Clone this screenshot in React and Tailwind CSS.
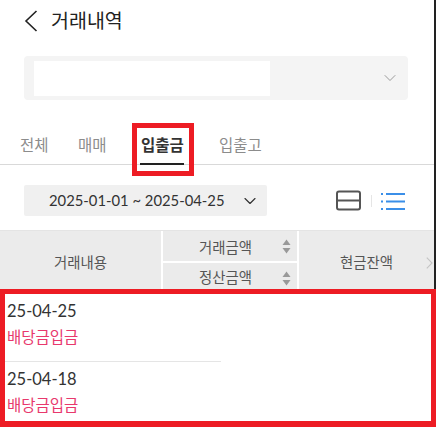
import React from "react";
import { ChevronDown } from "lucide-react";

const FONT = "font-['Lato','Noto_Sans_CJK_KR',sans-serif]";

function BackIcon() {
  return (
    <svg width="14" height="22" viewBox="0 0 14 22" fill="none" stroke="#222222" strokeWidth="1.6">
      <path d="M12.5 1 L2 11 L12.5 21" />
    </svg>
  );
}

function NextIcon() {
  return (
    <svg width="7" height="12" viewBox="0 0 7 12" fill="none" stroke="#c4c4c4" strokeWidth="1.1">
      <path d="M0.8 0.6 L6 6 L0.8 11.4" />
    </svg>
  );
}

function SortIcon() {
  return (
    <svg width="9" height="15" viewBox="0 0 9 15" className="shrink-0">
      <path d="M4.5 0.5 L8.5 6 H0.5 Z" fill="#999999" />
      <path d="M4.5 14.5 L8.5 9 H0.5 Z" fill="#999999" />
    </svg>
  );
}

function SplitViewIcon() {
  return (
    <svg width="26" height="22" viewBox="0 0 26 22" fill="none" stroke="#555555" strokeWidth="2">
      <rect x="1" y="1.5" width="23" height="18" rx="2" />
      <path d="M1 10.5 H24" />
    </svg>
  );
}

function ListViewIcon() {
  return (
    <svg width="24" height="18" viewBox="0 0 24 18" fill="none" stroke="#3b8fe8" strokeWidth="2">
      <path d="M5 2 H24 M5 9.5 H24 M5 17 H24" />
      <path d="M0 2 H2 M0 9.5 H2 M0 17 H2" />
    </svg>
  );
}

function Row({ date, label }) {
  return (
    <div className="h-[67px] flex flex-col pl-[2px]">
      <div className="text-[16.5px] leading-[24px] text-[#333333] mt-[5px]">{date}</div>
      <div className="text-[15.5px] leading-[24px] text-[#e8386d] mt-[2px]">{label}</div>
    </div>
  );
}

export default function App() {
  return (
    <div className={`w-[436px] h-[427px] overflow-hidden bg-white relative ${FONT}`}>
      {/* 헤더 */}
      <div className="h-[56px] pb-[14px] flex items-center pl-[24px]">
        <BackIcon />
        <span className="text-[19.5px] text-[#222222] ml-[13px]">거래내역</span>
      </div>

      {/* 계좌 선택 */}
      <div className="mx-[24px] w-[384px] h-[44px] bg-[#f4f4f4] rounded-[4px] flex items-center justify-between pl-[10px] pr-[8px]">
        <div className="w-[236px] h-[35px] bg-white" />
        <ChevronDown size={20} strokeWidth={1} color="#888888" />
      </div>

      {/* 탭 */}
      <div className="h-[65px] border-b border-[#d9d9d9] flex items-end pl-[20px] text-[15.5px] text-[#8c8c8c] leading-[20px]">
        <span className="w-[58px] mb-[9px]">전체</span>
        <span className="w-[63px] mb-[9px]">매매</span>
        <span className="relative w-[78px] mb-[9px] font-bold text-[#333333]">
          입출금
          <span className="absolute left-[-1px] top-[28px] w-[44px] h-[2px] bg-[#222222]" />
          <span className="absolute left-[-9px] top-[-12px] w-[62px] h-[53px] border-[5px] border-[#ed1c24]" />
        </span>
        <span className="mb-[9px]">입출고</span>
      </div>

      {/* 기간 */}
      <div className="h-[65px] flex items-start pt-[20px] pl-[24px]">
        <div className="w-[243px] h-[31px] bg-[#f0f0f0] rounded-[2px] flex items-center pl-[25px] text-[14.8px] text-[#333333]">
          <span>2025-01-01 ~ 2025-04-25</span>
          <ChevronDown size={20} strokeWidth={1.4} color="#333333" className="ml-[16px]" />
        </div>
        <div className="flex items-center h-[31px] ml-[69px]">
          <SplitViewIcon />
          <span className="w-px h-[12px] bg-[#e5e5e5] mx-[9px]" />
          <ListViewIcon />
        </div>
      </div>

      {/* 테이블 헤더 */}
      <div className="h-[59px] bg-[#ebebeb] flex text-[14.4px] text-[#555555] border-t border-[#e4e4e4]">
        <div className="w-[161px] flex items-center justify-center pt-[5px]">거래내용</div>
        <div className="w-[138px] border-x-2 border-white flex flex-col">
          <div className="h-[32px] flex items-center justify-center relative border-b-2 border-white pr-[9px] pt-[3px]">
            <span>거래금액</span>
            <span className="absolute right-[6px] top-[8px]"><SortIcon /></span>
          </div>
          <div className="flex-1 flex items-center justify-center relative pr-[9px] pt-[4px]">
            <span>정산금액</span>
            <span className="absolute right-[6px] top-[8px]"><SortIcon /></span>
          </div>
        </div>
        <div className="flex-1 flex items-center justify-center relative pt-[5px]">
          <span className="mr-[2px]">현금잔액</span>
          <span className="absolute right-[3px] top-[26px]"><NextIcon /></span>
        </div>
      </div>

      {/* 내역 */}
      <div className="h-[138px] border-[5px] border-b-[6px] border-[#ed1c24]">
        <Row date="25-04-25" label="배당금입금" />
        <div className="w-[216px] h-px bg-[#e5e5e5]" />
        <Row date="25-04-18" label="배당금입금" />
      </div>

      {/* 오른쪽 가장자리 선 */}
      <div className="absolute top-0 right-0 w-[2px] h-[289px] bg-[#222222]" />
    </div>
  );
}
